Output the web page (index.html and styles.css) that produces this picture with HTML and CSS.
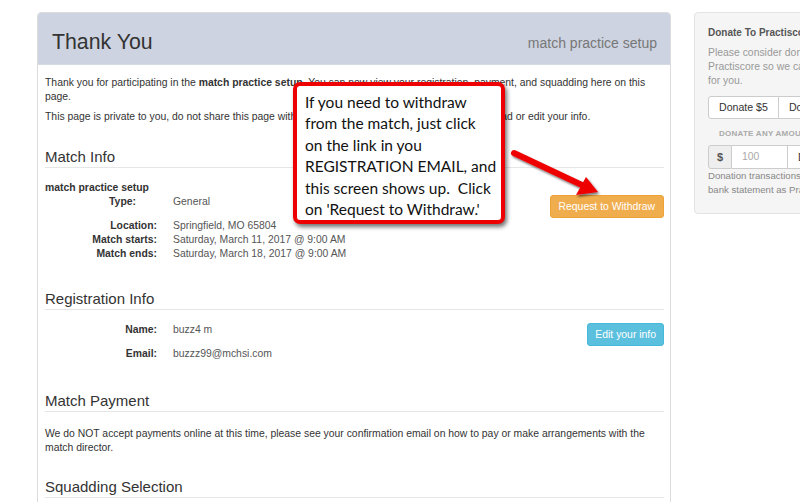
FILE: index.html
```html
<!DOCTYPE html>
<html>
<head>
<meta charset="utf-8">
<link rel="stylesheet" href="styles.css">
</head>
<body>
<div class="page">
  <div class="main">
    <div class="panel-head">
      <h1 class="title">Thank You</h1>
      <span class="subtitle">match practice setup</span>
    </div>
    <div class="panel-body">
      <p class="intro">Thank you for participating in the <b>match practice setup</b>. You can now view your registration, payment, and squadding here on this page.</p>
      <p class="intro2">This page is private to you, do not share this page with anyone. You can bookmark this page to reload or edit your info.</p>

      <h3 class="sec sec-match">Match Info</h3>
      <div class="info-row">
        <div class="info">
          <div class="match-name">match practice setup</div>
          <div class="kv kv-type"><span class="k">Type:</span><span class="v">General</span></div>
          <div class="kv kv-gap"><span class="k">Location:</span><span class="v">Springfield, MO 65804</span></div>
          <div class="kv"><span class="k">Match starts:</span><span class="v">Saturday, March 11, 2017 @ 9:00 AM</span></div>
          <div class="kv"><span class="k">Match ends:</span><span class="v">Saturday, March 18, 2017 @ 9:00 AM</span></div>
        </div>
        <div class="btn btn-warning">Request to Withdraw</div>
      </div>

      <h3 class="sec sec-reg">Registration Info</h3>
      <div class="info-row reg-row">
        <div class="info">
          <div class="kv kv-reg"><span class="k">Name:</span><span class="v">buzz4 m</span></div>
          <div class="kv kv-reg kv-reg2"><span class="k">Email:</span><span class="v">buzzz99@mchsi.com</span></div>
        </div>
        <div class="btn btn-info">Edit your info</div>
      </div>

      <h3 class="sec sec-pay">Match Payment</h3>
      <p class="pay">We do NOT accept payments online at this time, please see your confirmation email on how to pay or make arrangements with the match director.</p>

      <h3 class="sec sec-squad">Squadding Selection</h3>
    </div>
  </div>

  <div class="side">
    <div class="side-title">Donate To Practiscore</div>
    <p class="side-text">Please consider donating to<br>Practiscore so we can keep improving<br>for you.</p>
    <div class="btn-group">
      <div class="dbtn">Donate $5</div>
      <div class="dbtn">Donate $10</div>
    </div>
    <div class="any">Donate any amount</div>
    <div class="input-group">
      <div class="addon">$</div>
      <div class="input">100</div>
      <div class="dbtn dbtn-go">Donate</div>
    </div>
    <p class="side-note">Donation transactions will appear on your<br>bank statement as Practiscore.</p>
  </div>

  <div class="callout">If you need to withdraw<br>from the match, just click<br>on the link in you<br>REGISTRATION EMAIL, and<br>this screen shows up.&nbsp; Click<br>on 'Request to Withdraw.'</div>

  <svg class="arrow" width="110" height="70" viewBox="0 0 110 70">
    <defs>
      <filter id="sh" x="-20%" y="-20%" width="140%" height="140%">
        <feDropShadow dx="1.5" dy="2" stdDeviation="1.2" flood-color="#000" flood-opacity="0.55"/>
      </filter>
    </defs>
    <g filter="url(#sh)">
      <line x1="8" y1="8" x2="78" y2="41" stroke="#ee0000" stroke-width="6" stroke-linecap="round"/>
      <polygon points="92,47 70,50 80,32" fill="#ee0000"/>
    </g>
  </svg>
</div>
</body>
</html>
```
FILE: styles.css
```css
html, body {
  margin: 0;
  padding: 0;
  background: #fff;
  overflow: hidden;
}
body {
  width: 800px;
  height: 502px;
  font-family: "Liberation Sans", Arial, sans-serif;
  color: #333;
  font-size: 10.4px;
  line-height: 14px;
}
.page {
  position: relative;
  display: flex;
  gap: 23px;
  padding: 12px 0 0 37px;
  width: 1000px;
}
.main {
  width: 632px;
  flex-shrink: 0;
  border: 1px solid #dcdcdc;
  border-radius: 4px;
  height: 520px;
  overflow: hidden;
}
.panel-head {
  background: #cdd3e0;
  height: 51px;
  display: flex;
  align-items: center;
  justify-content: space-between;
  padding: 0 13px 0 14px;
  border-bottom: 1px solid #d6dae3;
}
.title {
  margin: 0;
  font-weight: normal;
  font-size: 21.3px;
  color: #333;
  padding-top: 6px;
}
.subtitle {
  font-size: 14px;
  color: #777;
  padding-top: 8px;
}
.panel-body {
  padding: 11px 6px 0 7px;
}
p { margin: 0; }
.intro2 { margin-top: 6px; }
.sec {
  margin: 0;
  font-weight: normal;
  font-size: 15px;
  line-height: 20px;
  color: #333;
  border-bottom: 1px solid #e6e6e6;
}
.sec-match { margin-top: 23px; }
.sec-reg { margin-top: 28px; }
.sec-pay { margin-top: 30px; }
.sec-squad { margin-top: 22px; }

.info-row {
  display: flex;
  justify-content: space-between;
  align-items: flex-start;
  margin-top: 13px;
}
.match-name { font-weight: bold; }
.kv { display: flex; color: #555; }
.k {
  width: 112px;
  text-align: right;
  font-weight: bold;
  color: #333;
}
.kv-type .k { width: 91px; padding-right: 21px; }
.v { margin-left: 16px; }
.kv-gap { margin-top: 10px; }
.kv-reg2 { margin-top: 10px; }

.btn {
  color: #fff;
  font-size: 10.4px;
  height: 21px;
  line-height: 21px;
  border-radius: 3px;
}
.btn-warning {
  background: #f0ad4e;
  border: 1px solid #eea236;
  margin-top: 14px;
  padding: 0 8px;
}
.btn-info {
  background: #5bc0de;
  border: 1px solid #46b8da;
  padding: 0 7px;
}
.pay {
  margin-top: 15px;
  color: #333;
}

/* Sidebar */
.side {
  width: 200px;
  flex-shrink: 0;
  background: #f5f5f5;
  border: 1px solid #e3e3e3;
  border-radius: 4px;
  height: 200px;
  padding: 0 0 0 13px;
  white-space: nowrap;
}
.side-title {
  font-weight: bold;
  font-size: 10px;
  color: #555;
  margin-top: 13px;
}
.side-text {
  color: #999;
  margin-top: 6px;
}
.btn-group {
  display: flex;
  margin-top: 8px;
}
.dbtn {
  background: #fff;
  border: 1px solid #ccc;
  height: 21px;
  line-height: 21px;
  padding: 0 10px;
  color: #333;
  font-size: 10.6px;
}
.btn-group .dbtn:first-child {
  border-radius: 3px 0 0 3px;
}
.btn-group .dbtn + .dbtn { border-left: none; }
.any {
  text-transform: uppercase;
  font-weight: bold;
  font-size: 8px;
  color: #aaa;
  letter-spacing: 0.25px;
  margin: 9px 0 0 11px;
  line-height: 12px;
}
.input-group {
  display: flex;
  margin-top: 5px;
}
.addon {
  background: #eee;
  border: 1px solid #ccc;
  border-radius: 3px 0 0 3px;
  width: 22px;
  height: 22px;
  line-height: 22px;
  text-align: center;
  font-weight: bold;
  font-size: 11px;
  color: #555;
}
.input {
  background: #fff;
  border: 1px solid #ccc;
  border-left: none;
  width: 45px;
  height: 22px;
  line-height: 22px;
  padding-left: 10px;
  color: #aaa;
}
.dbtn-go { border-left: none; height: 22px; line-height: 22px; }
.side-note {
  color: #888;
  font-size: 9.6px;
  line-height: 14px;
}

/* Annotation */
.callout {
  position: absolute;
  left: 293px;
  top: 82px;
  width: 196px;
  height: 128px;
  border: 4px solid #ee0000;
  border-radius: 7px;
  background: #fff;
  box-shadow: 2px 3px 4px rgba(0, 0, 0, 0.55);
  padding: 6px 0 0 8px;
  font-family: Lato, "Noto Sans", sans-serif;
  font-size: 15.5px;
  line-height: 21.4px;
  color: #111;
  white-space: nowrap;
}
.arrow {
  position: absolute;
  left: 506px;
  top: 145px;
}
```
